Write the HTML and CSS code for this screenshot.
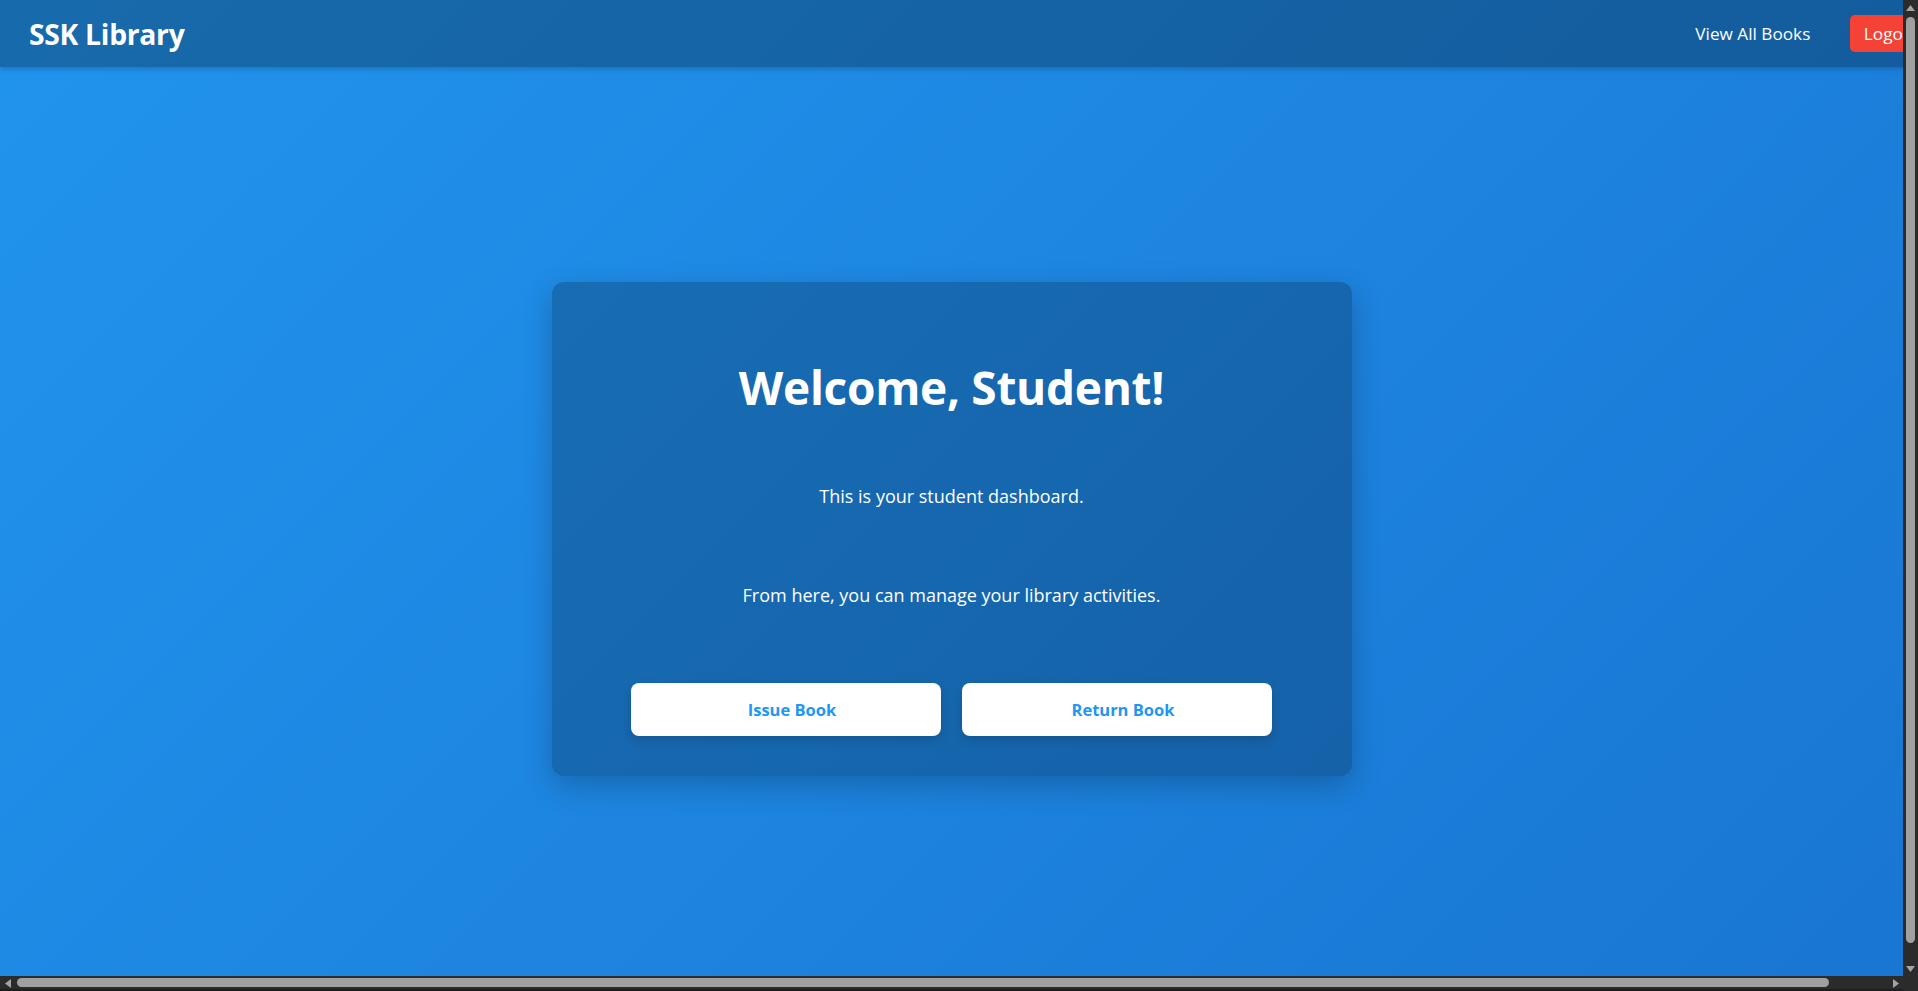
FILE: index.html
```html
<!DOCTYPE html>
<html lang="en">
<head>
<meta charset="utf-8">
<title>SSK Library - Student Dashboard</title>
<link rel="stylesheet" href="styles.css">
</head>
<body>
<div class="window">
  <div class="viewport">
    <div class="page">
      <nav class="navbar">
        <div class="brand">SSK Library</div>
        <div class="nav-links">
          <a class="nav-link" href="#">View All Books</a>
          <a class="logout" href="#">Logout</a>
        </div>
      </nav>
      <main class="main">
        <section class="card">
          <h1 class="title">Welcome, Student!</h1>
          <p class="text text-first">This is your student dashboard.</p>
          <p class="text text-second">From here, you can manage your library activities.</p>
          <div class="actions">
            <button class="btn">Issue Book</button>
            <button class="btn">Return Book</button>
          </div>
        </section>
      </main>
    </div>
  </div>
  <div class="vbar">
    <div class="arrow-box"><svg width="9" height="6" viewBox="0 0 9 6"><path d="M4.5 0 L9 6 L0 6 Z" fill="#a3a3a3"/></svg></div>
    <div class="vtrack"><div class="thumb"></div></div>
    <div class="arrow-box"><svg width="9" height="6" viewBox="0 0 9 6"><path d="M0 0 L9 0 L4.5 6 Z" fill="#a3a3a3"/></svg></div>
  </div>
  <div class="hbar">
    <div class="arrow-box"><svg width="6" height="9" viewBox="0 0 6 9"><path d="M6 0 L6 9 L0 4.5 Z" fill="#a3a3a3"/></svg></div>
    <div class="htrack"><div class="thumb"></div></div>
    <div class="arrow-box"><svg width="6" height="9" viewBox="0 0 6 9"><path d="M0 0 L6 4.5 L0 9 Z" fill="#a3a3a3"/></svg></div>
  </div>
  <div class="corner"></div>
</div>
</body>
</html>
```
FILE: styles.css
```css
* { box-sizing: border-box; }

html, body {
  margin: 0;
  padding: 0;
  overflow: hidden;
}

body {
  font-family: "Open Sans", "Noto Sans", sans-serif;
  color: #ffffff;
}

.window {
  display: grid;
  grid-template-columns: 1fr 15px;
  grid-template-rows: 1fr 15px;
  width: 100vw;
  height: 100vh;
  background: #2b2b2b;
}

.viewport {
  overflow: hidden;
  min-width: 0;
  min-height: 0;
}

.page {
  min-height: 991px;
  display: flex;
  flex-direction: column;
  background: linear-gradient(135deg, #2194ee 0%, #1976d2 100%);
}

.navbar {
  box-sizing: content-box;
  width: 100%;
  height: 67px;
  padding: 0 30px;
  display: flex;
  align-items: center;
  justify-content: space-between;
  background: rgba(0, 0, 0, 0.28);
  box-shadow: 0 2px 6px rgba(0, 0, 0, 0.2);
  flex-shrink: 0;
}

.brand {
  font-size: 28.3px;
  font-weight: 700;
  letter-spacing: -0.3px;
  margin-left: -1px;
}

.nav-links {
  display: flex;
  align-items: center;
  gap: 40px;
}

.nav-link {
  color: #ffffff;
  text-decoration: none;
  font-size: 17.2px;
}

.logout {
  color: #ffffff;
  text-decoration: none;
  font-size: 17.2px;
  background: #f44336;
  border-radius: 5px;
  height: 37px;
  padding: 0 13.5px;
  display: flex;
  align-items: center;
}

.main {
  flex: 1;
  display: flex;
  align-items: center;
  justify-content: center;
}

.card {
  width: 800px;
  padding: 40px;
  border-radius: 12px;
  background: rgba(0, 0, 0, 0.22);
  box-shadow: 0 10px 30px rgba(0, 0, 0, 0.22);
  text-align: center;
}

.title {
  margin: 33px 0 0;
  font-size: 46px;
  line-height: 64px;
  font-weight: 700;
  letter-spacing: -0.3px;
}

.text {
  margin: 0;
  font-size: 18px;
  line-height: 24px;
}

.text-first { margin-top: 65px; }
.text-second { margin-top: 75px; }

.actions {
  margin-top: 76px;
  display: flex;
  justify-content: center;
  gap: 21px;
}

.btn {
  width: 310px;
  height: 53px;
  border: none;
  border-radius: 8px;
  padding: 0 0 0 12px;
  background: #ffffff;
  color: #2196f3;
  font-family: "Open Sans", "Noto Sans", sans-serif;
  font-size: 16.5px;
  font-weight: 700;
  box-shadow: 0 4px 10px rgba(0, 0, 0, 0.15);
}

/* fake dark scrollbars */
.vbar {
  display: flex;
  flex-direction: column;
  background: #2b2b2b;
}

.hbar {
  display: flex;
  background: #2b2b2b;
  border-bottom: 2px solid #1e1e1e;
}

.corner {
  background: #2b2b2b;
}

.arrow-box {
  width: 15px;
  height: 15px;
  flex-shrink: 0;
  display: flex;
  align-items: center;
  justify-content: center;
}

.vtrack {
  flex: 1;
  padding: 2px 3px 18px 3px;
  display: flex;
}

.htrack {
  flex: 1;
  padding: 2px 59px 2px 2px;
  display: flex;
}

.thumb {
  flex: 1;
  background: #a0a0a0;
  border-radius: 5px;
}
```
